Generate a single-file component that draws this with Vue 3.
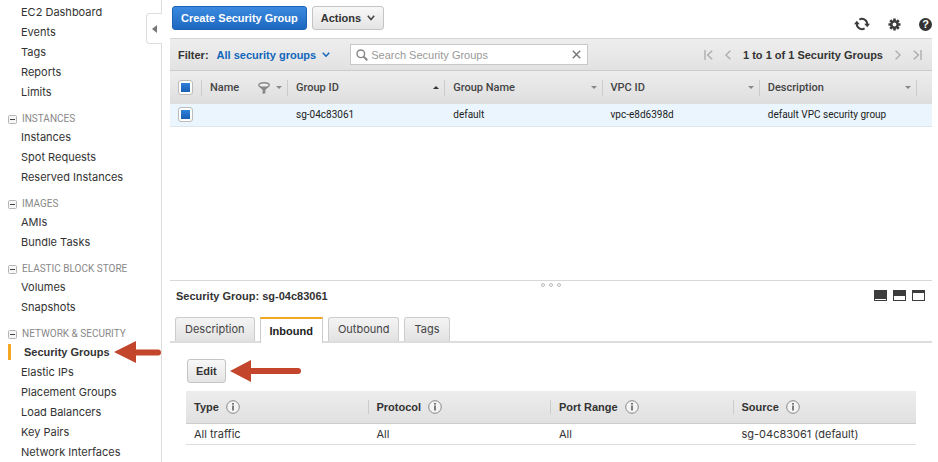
<script setup>
import { ref } from 'vue'

const navGroups = [
  { title: '', items: ['EC2 Dashboard', 'Events', 'Tags', 'Reports', 'Limits'] },
  { title: 'INSTANCES', items: ['Instances', 'Spot Requests', 'Reserved Instances'] },
  { title: 'IMAGES', items: ['AMIs', 'Bundle Tasks'] },
  { title: 'ELASTIC BLOCK STORE', items: ['Volumes', 'Snapshots'] },
  {
    title: 'NETWORK & SECURITY',
    items: ['Security Groups', 'Elastic IPs', 'Placement Groups', 'Load Balancers', 'Key Pairs', 'Network Interfaces'],
  },
]
const current = 'Security Groups'
const search = ref('')
const allSelected = ref(true)
const rowSelected = ref(true)
const tabs = ['Description', 'Inbound', 'Outbound', 'Tags']
const activeTab = ref('Inbound')
const ruleColumns = ['Type', 'Protocol', 'Port Range', 'Source']
const rule = ['All traffic', 'All', 'All', 'sg-04c83061 (default)']
</script>

<template>
  <div class="console">
    <nav class="sidebar">
      <section v-for="group in navGroups" :key="group.title">
        <h2 v-if="group.title" class="nav-title">
          <svg class="collapse" viewBox="0 0 9 9" width="9" height="9">
            <rect x="0.5" y="0.5" width="8" height="8" rx="1" fill="#f6f6f6" stroke="#b5b5b5" />
            <path d="M2 4.5h5" stroke="#444" />
          </svg>
          {{ group.title }}
        </h2>
        <ul class="nav-list">
          <li v-for="item in group.items" :key="item" :class="['nav-item', { current: item === current }]">
            <a href="#">{{ item }}</a>
            <svg v-if="item === current" class="arrow" viewBox="0 0 47 24" width="47" height="24">
              <path d="M20 12.500H44" stroke="#c3462c" stroke-width="6" stroke-linecap="round" />
              <path d="M0 12L22 1V23Z" fill="#c3462c" />
            </svg>
          </li>
        </ul>
      </section>
      <button class="fold" type="button" aria-label="Hide navigation">
        <svg viewBox="0 0 5 8" width="5" height="8"><path d="M5 0V8L0 4Z" fill="#777" /></svg>
      </button>
    </nav>

    <main class="main">
      <header class="toolbar">
        <button class="btn primary" type="button">Create Security Group</button>
        <button class="btn" type="button">
          Actions
          <svg viewBox="0 0 8 6" width="8" height="6"><path d="M0.800 0.800L4 4.500L7.200 0.800" fill="none" stroke="#444" stroke-width="1.500" /></svg>
        </button>
        <div class="tools">
          <button class="icon" type="button" aria-label="Refresh">
            <svg viewBox="0 0 16 14" width="16" height="14">
              <path d="M5.400 2.600A5.200 5.200 0 0 1 13.200 7.200M10.600 11.400A5.200 5.200 0 0 1 2.800 6.800" fill="none" stroke="#3c3c3c" stroke-width="2" />
              <path d="M10.200 6.800H16L13.200 10.200ZM0 7.200H5.800L2.800 3.800Z" fill="#3c3c3c" />
            </svg>
          </button>
          <button class="icon" type="button" aria-label="Settings">
            <svg viewBox="0 0 14 14" width="13" height="13">
              <path d="M7 0.500V13.500M0.500 7H13.500M2.400 2.400L11.600 11.600M11.600 2.400L2.400 11.600" stroke="#3c3c3c" stroke-width="2.800" />
              <circle cx="7" cy="7" r="3.400" fill="#fff" stroke="#3c3c3c" stroke-width="2.600" />
            </svg>
          </button>
          <button class="icon help" type="button" aria-label="Help">?</button>
        </div>
      </header>

      <div class="filter">
        <span class="label">Filter:</span>
        <button class="scope" type="button">
          All security groups
          <svg viewBox="0 0 8 6" width="8" height="6"><path d="M0.800 0.800L4 4.200L7.200 0.800" fill="none" stroke="#1166bb" stroke-width="1.500" /></svg>
        </button>
        <div class="search">
          <svg viewBox="0 0 12 12" width="12" height="12">
            <circle cx="4.800" cy="4.800" r="3.800" fill="none" stroke="#888" stroke-width="1.400" />
            <path d="M7.600 7.600L11.300 11.300" stroke="#888" stroke-width="2" />
          </svg>
          <input v-model="search" type="text" placeholder="Search Security Groups" aria-label="Search Security Groups" />
          <button class="icon" type="button" aria-label="Clear search" @click="search = ''">
            <svg viewBox="0 0 9 9" width="9" height="9"><path d="M0.800 0.800L8.200 8.200M8.200 0.800L0.800 8.200" stroke="#777" stroke-width="1.400" /></svg>
          </button>
        </div>
        <div class="pager">
          <button class="icon" type="button" aria-label="First page">
            <svg viewBox="0 0 9 10" width="9" height="10"><path d="M1 0V10M8.200 0.800L3.600 5L8.200 9.200" fill="none" stroke="#aaa" stroke-width="1.300" /></svg>
          </button>
          <button class="icon" type="button" aria-label="Previous page">
            <svg viewBox="0 0 6 10" width="6" height="10"><path d="M5.400 0.800L0.900 5L5.400 9.200" fill="none" stroke="#aaa" stroke-width="1.300" /></svg>
          </button>
          <span class="range">1 to 1 of 1 Security Groups</span>
          <button class="icon" type="button" aria-label="Next page">
            <svg viewBox="0 0 6 10" width="6" height="10"><path d="M0.600 0.800L5.100 5L0.600 9.200" fill="none" stroke="#aaa" stroke-width="1.300" /></svg>
          </button>
          <button class="icon" type="button" aria-label="Last page">
            <svg viewBox="0 0 9 10" width="9" height="10"><path d="M8 0V10M0.800 0.800L5.400 5L0.800 9.200" fill="none" stroke="#aaa" stroke-width="1.300" /></svg>
          </button>
        </div>
      </div>

      <table class="groups">
        <colgroup>
          <col class="c-check" /><col class="c-name" /><col /><col /><col /><col /><col class="c-end" />
        </colgroup>
        <thead>
          <tr>
            <th><div class="head"><input v-model="allSelected" type="checkbox" aria-label="Select all" /></div></th>
            <th>
              <div class="head">
                Name
                <svg class="funnel" viewBox="0 0 12 12" width="12" height="12">
                  <ellipse cx="6" cy="3" rx="5.200" ry="2.300" fill="#eee" stroke="#888" stroke-width="1.400" />
                  <path d="M0.800 4L4.600 8V12L7.400 11.200V8L11.200 4Q6 6.600 0.800 4Z" fill="#888" />
                </svg>
                <i class="caret"></i>
              </div>
            </th>
            <th><div class="head">Group ID<i class="caret up"></i></div></th>
            <th><div class="head">Group Name<i class="caret"></i></div></th>
            <th><div class="head">VPC ID<i class="caret"></i></div></th>
            <th><div class="head">Description<i class="caret"></i></div></th>
            <th><div class="head"></div></th>
          </tr>
        </thead>
        <tbody>
          <tr>
            <td><input v-model="rowSelected" type="checkbox" aria-label="Select sg-04c83061" /></td>
            <td></td>
            <td>sg-04c83061</td>
            <td>default</td>
            <td>vpc-e8d6398d</td>
            <td colspan="2">default VPC security group</td>
          </tr>
        </tbody>
      </table>

      <section class="detail">
        <div class="grip"><i></i><i></i><i></i></div>
        <div class="detail-head">
          <h1>Security Group: sg-04c83061</h1>
          <div class="layouts">
            <button class="pane low" type="button" aria-label="Minimize panel"><i></i></button>
            <button class="pane mid" type="button" aria-label="Split panel"><i></i></button>
            <button class="pane high" type="button" aria-label="Maximize panel"><i></i></button>
          </div>
        </div>
        <div class="tabs" role="tablist">
          <button
            v-for="tab in tabs"
            :key="tab"
            type="button"
            role="tab"
            :aria-selected="tab === activeTab"
            :class="['tab', { active: tab === activeTab }]"
            @click="activeTab = tab"
          >{{ tab }}</button>
        </div>
        <div class="panel">
          <div class="edit-row">
            <button class="btn" type="button">Edit</button>
            <svg viewBox="0 0 72 24" width="72" height="24">
              <path d="M20 12H68" stroke="#c3462c" stroke-width="6" stroke-linecap="round" />
              <path d="M0 12L21 1V23Z" fill="#c3462c" />
            </svg>
          </div>
          <table class="rules">
            <thead>
              <tr>
                <th v-for="column in ruleColumns" :key="column">
                  <div class="head">
                    {{ column }}
                    <svg viewBox="0 0 14 14" width="14" height="14">
                      <circle cx="7" cy="7" r="6.300" fill="#f4f4f4" stroke="#888" />
                      <path d="M7 5.600V10.600" stroke="#555" stroke-width="1.500" />
                      <rect x="6.200" y="3" width="1.600" height="1.600" fill="#555" />
                    </svg>
                  </div>
                </th>
              </tr>
            </thead>
            <tbody>
              <tr><td v-for="(value, i) in rule" :key="i">{{ value }}</td></tr>
            </tbody>
          </table>
        </div>
      </section>
    </main>
  </div>
</template>

<style>
body {
  margin: 0;
  background: #fff;
}
</style>

<style scoped>
* {
  box-sizing: border-box;
}
.console {
  display: flex;
  min-height: 100vh;
  font: 11px/16px 'Liberation Sans', Arial, sans-serif;
  color: #333;
}
button {
  margin: 0;
  font: inherit;
  color: inherit;
  cursor: pointer;
}
svg {
  flex: none;
  display: block;
}

.sidebar {
  position: relative;
  flex: none;
  width: 162px;
  padding-top: 2px;
  border-right: 1px solid #ddd;
}
.nav-title {
  display: flex;
  align-items: center;
  gap: 5px;
  margin: 9px 0 0;
  padding-left: 8px;
  font-family: Roboto, sans-serif;
  font-size: 10px;
  line-height: 16px;
  font-weight: 400;
  color: #888;
}
.nav-list {
  margin: 0;
  padding: 0;
  list-style: none;
}
.nav-item {
  display: flex;
  align-items: center;
  height: 20px;
  padding-left: 21px;
  font-family: Inter, sans-serif;
}
.nav-item a {
  color: #333;
  text-decoration: none;
}
.nav-item.current {
  padding-left: 8px;
  font-family: 'Liberation Sans', Arial, sans-serif;
  font-weight: 700;
}
.nav-item.current a {
  padding-left: 13px;
  border-left: 3px solid #f5a623;
  white-space: nowrap;
}
.arrow {
  margin-left: auto;
}
.fold {
  position: absolute;
  top: 13px;
  right: -1px;
  width: 16px;
  height: 31px;
  display: grid;
  place-items: center;
  padding: 0;
  background: #fff;
  border: 1px solid #ddd;
  border-right: 0;
  border-radius: 4px 0 0 4px;
}

.main {
  flex: 1;
  min-width: 0;
  display: flex;
  flex-direction: column;
  padding: 6px 6px 0 8px;
}
.toolbar {
  display: flex;
  align-items: flex-start;
  gap: 5px;
  height: 32px;
  padding-left: 2px;
}
.btn {
  display: flex;
  align-items: center;
  gap: 6px;
  height: 24px;
  padding: 0 8px;
  border: 1px solid #c4c4c4;
  border-radius: 3px;
  background: linear-gradient(#f8f8f8, #e4e4e4);
  font-weight: 700;
  white-space: nowrap;
}
.btn.primary {
  border-color: #1c62b5;
  background: linear-gradient(#3b8ae0, #1e68c0);
  color: #fff;
}
.icon {
  display: grid;
  place-items: center;
  padding: 0;
  border: 0;
  background: none;
}
.tools {
  display: flex;
  align-items: center;
  gap: 18px;
  height: 36px;
  margin-left: auto;
}
.help {
  width: 13px;
  height: 13px;
  border-radius: 50%;
  background: #333;
  color: #fff;
  font-weight: 700;
  line-height: 13px;
}

.filter {
  display: flex;
  align-items: center;
  height: 33px;
  padding: 0 10px 0 8px;
  border-top: 1px solid #d5d5d5;
  border-bottom: 1px solid #ccc;
  background: linear-gradient(#eee, #e2e2e2);
  font-weight: 700;
}
.scope {
  display: flex;
  align-items: center;
  gap: 6px;
  margin: 0 20px 0 8px;
  padding: 0;
  border: 0;
  background: none;
  color: #1166bb;
}
.search {
  display: flex;
  align-items: center;
  gap: 3px;
  width: 238px;
  height: 21px;
  padding: 0 6px 0 5px;
  border: 1px solid #c8c8c8;
  background: #fff;
}
.search input {
  flex: 1;
  min-width: 0;
  padding: 0;
  border: 0;
  outline: 0;
  font: 11px 'Liberation Sans', Arial, sans-serif;
  color: #333;
}
.search input::placeholder {
  color: #999;
}
.pager {
  display: flex;
  align-items: center;
  gap: 12px;
  margin-left: auto;
}

table {
  width: 100%;
  border-collapse: collapse;
  table-layout: fixed;
}
th,
td {
  padding: 0;
  text-align: left;
  white-space: nowrap;
}
.head {
  display: flex;
  align-items: center;
  border-right: 1px solid #ccc;
}
.groups {
  font-family: Roboto, sans-serif;
}
.c-check {
  width: 32px;
}
.c-name {
  width: 86px;
}
.c-end {
  width: 15px;
}
.groups thead {
  background: linear-gradient(#ededed, #dedede);
}
.groups th {
  height: 33px;
  font-size: 11px;
  font-weight: 500;
  color: #444;
}
.groups .head {
  height: 16px;
  padding: 0 5px 0 8px;
}
.groups th:last-child .head {
  border: 0;
}
.groups td {
  height: 22px;
  padding-left: 8px;
  border-bottom: 1px solid #dde6ec;
  background: #eaf5fd;
  font-size: 10px;
  line-height: 16px;
  color: #222;
}
.caret {
  margin-left: auto;
  border: 3px solid transparent;
  border-top-color: #888;
  border-bottom: 0;
}
.caret.up {
  border-top: 0;
  border-bottom: 3px solid #333;
}
.funnel {
  margin-left: auto;
}
.funnel + .caret {
  margin-left: 6px;
}
input[type='checkbox'] {
  appearance: none;
  flex: none;
  display: block;
  width: 15px;
  height: 15px;
  margin: 0;
  border: 1px solid #bbb;
  border-radius: 3px;
  background: #fff;
}
input[type='checkbox']:checked {
  background: linear-gradient(#2f80d8, #1a5fb4) content-box, #fff;
  padding: 2px;
}

.detail {
  margin-top: auto;
  border-top: 1px solid #d8d8d8;
}
.grip {
  display: flex;
  justify-content: center;
  gap: 4px;
  padding-top: 2px;
}
.grip i {
  width: 4px;
  height: 4px;
  border: 1px solid #bbb;
  border-radius: 50%;
}
.detail-head {
  display: flex;
  align-items: center;
  justify-content: space-between;
  padding: 1px 7px 0 6px;
}
h1 {
  margin: 0;
  font-size: 11px;
  line-height: 16px;
}
.layouts {
  display: flex;
  gap: 6px;
}
.pane {
  display: flex;
  flex-direction: column;
  justify-content: flex-end;
  width: 13px;
  height: 11px;
  padding: 1px;
  border: 0;
  background: #3c3c3c;
}
.pane i {
  height: 1px;
  background: #fff;
}
.pane.mid i {
  height: 4px;
}
.pane.high i {
  height: 7px;
}
.tabs {
  display: flex;
  align-items: flex-end;
  gap: 5px;
  height: 39px;
  padding-left: 5px;
  border-bottom: 2px solid #ddd;
}
.tab {
  height: 24px;
  padding: 0 9px;
  border: 1px solid #ccc;
  border-bottom: 0;
  border-radius: 3px 3px 0 0;
  background: linear-gradient(#f4f4f4, #e2e2e2);
  font-family: Inter, sans-serif;
  color: #444;
}
.tab.active {
  height: 26px;
  margin-bottom: -2px;
  border-top: 2px solid #f5a623;
  border-radius: 0;
  background: #fff;
  color: #222;
  font-family: 'Liberation Sans', Arial, sans-serif;
  font-weight: 700;
}
.panel {
  padding: 16px 16px 17px;
}
.edit-row {
  display: flex;
  align-items: center;
  gap: 4px;
  padding: 0 0 8px 1px;
}
.rules thead {
  background: linear-gradient(#ededed, #e0e0e0);
}
.rules th {
  height: 33px;
  border-bottom: 1px solid #ccc;
  font-weight: 700;
}
.rules .head {
  gap: 7px;
  height: 14px;
  padding-left: 8px;
}
.rules th:last-child .head {
  border: 0;
}
.rules td {
  height: 21px;
  padding-left: 8px;
  border-bottom: 1px solid #ddd;
  font-family: Inter, sans-serif;
}
</style>
